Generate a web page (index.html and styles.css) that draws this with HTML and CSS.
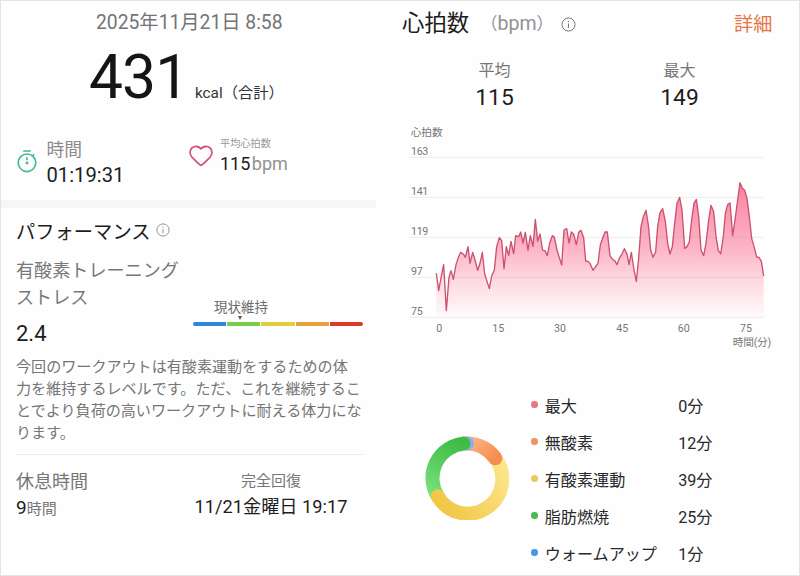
FILE: index.html
```html
<!DOCTYPE html>
<html lang="ja">
<head>
<meta charset="utf-8">
<title>ワークアウト</title>
<link rel="stylesheet" href="styles.css">
</head>
<body>
<main class="page">
  <section class="summary">
    <p class="date">2025年11月21日 8:58</p>
    <p class="calories"><span class="calories-value">431</span><span class="calories-unit">kcal（合計）</span></p>
    <div class="stats">
      <div class="stat stat-time">
        <svg class="timer-icon" viewBox="0 0 20 24" fill="none" stroke="#45b898" stroke-width="1.7">
          <circle cx="10" cy="13.8" r="8.8"/><path d="M6.2 2h7.6M15.8 5.4l1.4 1.2M10 8.2v3"/><circle cx="10" cy="14" r="1.1" fill="#45b898" stroke-width="1"/>
        </svg>
        <div><p class="stat-label">時間</p><p class="stat-value">01:19:31</p></div>
      </div>
      <div class="stat stat-heart">
        <svg class="heart-icon" viewBox="0 0 24 22" fill="none" stroke="#d5557a" stroke-width="1.8" stroke-linejoin="round">
          <path d="M12 20.3Q10.9 20 9.8 18.9L3.3 12.6C.1 9.4.5 5 3.1 2.8C5.8.6 9.700 1.200 12 3.800C14.300 1.200 18.200.6 20.900 2.800C23.500 5 23.900 9.400 20.700 12.600L14.200 18.900Q13.100 20 12 20.300Z"/>
        </svg>
        <div><p class="stat-small">平均心拍数</p><p class="stat-bpm">115<span>bpm</span></p></div>
      </div>
    </div>
    <div class="band"></div>
    <div class="performance">
      <h2 class="perf-title">パフォーマンス
        <svg class="info-small" viewBox="0 0 14 14" fill="none" stroke="#888" stroke-width="0.9"><circle cx="7" cy="7" r="6.100"/><path d="M7 6v4.300M7 3.600v1.200"/></svg>
      </h2>
      <div class="stress">
        <div class="stress-text"><p class="stress-label">有酸素トレーニング<br>ストレス</p><p class="stress-value">2.4</p></div>
        <div class="scale">
          <p class="scale-label">現状維持</p>
          <svg class="scale-mark" viewBox="0 0 4 4"><path d="M0 0h4L2 4z" fill="#555"/></svg>
          <div class="scale-bar"><i class="blue"></i><i class="green"></i><i class="yellow"></i><i class="orange"></i><i class="red"></i></div>
        </div>
      </div>
      <p class="note">今回のワークアウトは有酸素運動をするための体<br>力を維持するレベルです。ただ、これを継続するこ<br>とでより負荷の高いワークアウトに耐える体力にな<br>ります。</p>
      <div class="rest">
        <div><p class="rest-label">休息時間</p><p class="rest-value">9<span>時間</span></p></div>
        <div class="recovery"><p class="recovery-label">完全回復</p><p class="recovery-value">11/21金曜日 19:17</p></div>
      </div>
    </div>
  </section>

  <section class="heart">
    <header class="heart-head">
      <h1>心拍数</h1><span class="heart-unit"><span class="paren">（</span>bpm<span class="paren">）</span></span>
      <svg class="info-large" viewBox="0 0 14 14" fill="none" stroke="#777" stroke-width="0.9"><circle cx="7" cy="7" r="6.100"/><path d="M7 6v4.300M7 3.600v1.200"/></svg>
      <a class="detail">詳細</a>
    </header>
    <div class="extremes">
      <div><p class="ext-label">平均</p><p class="ext-value">115</p></div>
      <div><p class="ext-label">最大</p><p class="ext-value">149</p></div>
    </div>
    <svg class="chart" viewBox="0 0 1200 720">
      <defs>
        <linearGradient id="area" gradientUnits="userSpaceOnUse" x1="0" y1="188" x2="0" y2="590">
          <stop offset="0" stop-color="#fb839f"/><stop offset=".5" stop-color="#fcb6c7"/><stop offset=".75" stop-color="#fddce3"/><stop offset="1" stop-color="#fffafb"/>
        </linearGradient>
      </defs>
      <path class="area" d="M109 460L116 512 124 468 131 434 139 572 147 472 153 452 160 478 168 434 175 412 182 397 190 402 196 412 204 380 210 430 218 397 225 420 233 451 240 430 247 397 254 462 261 484 268 506 275 468 283 450 290 380 298 353 305 362 312 446 319 380 326 406 333 364 341 401 347 347 356 350 362 336 369 369 376 337 384 391 391 347 399 379 406 298 413 364 420 342 428 391 435 392 442 407 449 370 457 347 463 351 471 390 478 413 485 435 492 330 500 326 507 369 514 336 521 342 529 374 536 337 543 331 551 353 557 423 565 425 571 432 579 451 587 440 594 430 601 375 608 355 615 336 622 336 630 407 636 416 644 422 651 434 658 415 666 402 673 386 681 402 687 434 694 397 702 450 709 484 716 415 723 320 730 290 738 271 745 315 752 390 759 412 767 395 773 320 780 278 788 266 796 305 803 370 810 402 817 380 824 310 831 250 839 232 846 270 854 385 861 380 868 365 875 300 882 250 889 238 896 290 903 390 911 407 918 370 926 300 933 256 941 275 948 350 955 391 962 402 970 350 976 280 983 254 990 249 998 347 1005 300 1013 240 1020 188 1027 205 1034 211 1041 235 1048 290 1055 355 1063 383 1070 411 1077 412 1084 424 1091 468V590H109z"/>
      <path class="grid" d="M30 112H1091M30 232H1091M30 352H1091M30 472H1091M30 592H1091"/>
      <path class="line" d="M109 460L116 512 124 468 131 434 139 572 147 472 153 452 160 478 168 434 175 412 182 397 190 402 196 412 204 380 210 430 218 397 225 420 233 451 240 430 247 397 254 462 261 484 268 506 275 468 283 450 290 380 298 353 305 362 312 446 319 380 326 406 333 364 341 401 347 347 356 350 362 336 369 369 376 337 384 391 391 347 399 379 406 298 413 364 420 342 428 391 435 392 442 407 449 370 457 347 463 351 471 390 478 413 485 435 492 330 500 326 507 369 514 336 521 342 529 374 536 337 543 331 551 353 557 423 565 425 571 432 579 451 587 440 594 430 601 375 608 355 615 336 622 336 630 407 636 416 644 422 651 434 658 415 666 402 673 386 681 402 687 434 694 397 702 450 709 484 716 415 723 320 730 290 738 271 745 315 752 390 759 412 767 395 773 320 780 278 788 266 796 305 803 370 810 402 817 380 824 310 831 250 839 232 846 270 854 385 861 380 868 365 875 300 882 250 889 238 896 290 903 390 911 407 918 370 926 300 933 256 941 275 948 350 955 391 962 402 970 350 976 280 983 254 990 249 998 347 1005 300 1013 240 1020 188 1027 205 1034 211 1041 235 1048 290 1055 355 1063 383 1070 411 1077 412 1084 424 1091 468"/>
      <g class="axis">
        <text x="32" y="49">心拍数</text>
        <text x="33" y="104" textLength="52">163</text><text x="33" y="224" textLength="52">141</text><text x="33" y="344" textLength="52">119</text><text x="33" y="465" textLength="35">97</text><text x="33" y="585" textLength="35">75</text>
        <g class="ticks"><text x="118" y="636">0</text><text x="295" y="636">15</text><text x="480" y="636">30</text><text x="667" y="636">45</text><text x="851" y="636">60</text><text x="1038" y="636">75</text></g>
        <text x="998" y="678" textLength="116">時間(分)</text>
      </g>
    </svg>
    <div class="zones">
      <svg class="donut" viewBox="0 0 84 84" fill="none" stroke-width="14">
        <defs>
          <linearGradient id="go" gradientUnits="userSpaceOnUse" x1="46" y1="6" x2="70" y2="24"><stop stop-color="#fab181"/><stop offset="1" stop-color="#f48d50"/></linearGradient>
          <linearGradient id="gy" gradientUnits="userSpaceOnUse" x1="76" y1="25" x2="14" y2="64"><stop stop-color="#fce58a"/><stop offset="1" stop-color="#f2c747"/></linearGradient>
          <linearGradient id="gg" gradientUnits="userSpaceOnUse" x1="10" y1="60" x2="38" y2="6"><stop stop-color="#79e07c"/><stop offset="1" stop-color="#3dbb42"/></linearGradient>
        </defs>
        <path d="M42 7.400A34.600 34.600 0 0 1 70.300 22.200" stroke="url(#go)"/>
        <path d="M39.200 7.500L42 7.400" stroke="#83aff0" stroke-linecap="round"/>
        <path d="M12.700 60.300A34.600 34.600 0 0 1 38.400 7.600" stroke="url(#gg)" stroke-linecap="round"/>
        <path d="M70.300 22.200A34.600 34.600 0 1 1 12.700 60.300" stroke="url(#gy)" stroke-linecap="round"/>
        <path d="M58 11.400A34.600 34.600 0 0 1 70.300 22.200" stroke="url(#go)"/>
        <circle cx="70.300" cy="22.200" r="7" fill="url(#go)" stroke="none"/>
      </svg>
      <ul class="legend">
        <li><i class="z-max"></i><span>最大</span><b>0分</b></li>
        <li><i class="z-anaerobic"></i><span>無酸素</span><b>12分</b></li>
        <li><i class="z-aerobic"></i><span>有酸素運動</span><b>39分</b></li>
        <li><i class="z-fat"></i><span>脂肪燃焼</span><b>25分</b></li>
        <li><i class="z-warm"></i><span>ウォームアップ</span><b>1分</b></li>
      </ul>
    </div>
  </section>
</main>
</body>
</html>
```
FILE: styles.css
```css
* { box-sizing: border-box; margin: 0; padding: 0; }
body { width: 800px; height: 576px; overflow: hidden; font-family: Roboto, "Noto Sans CJK JP", sans-serif; color: #1d1d1d; background: #fefefe; white-space: nowrap; }
svg { display: block; flex: none; }
.page { display: grid; grid-template-columns: 399px 399px; width: 800px; height: 576px; border: 1px solid #e4e4e4; }
.summary { width: 375px; }
.date { height: 42px; line-height: 43px; padding-left: 95px; font-size: 19.300px; color: #747474; }
.calories { display: flex; align-items: baseline; height: 82px; padding-left: 88px; line-height: 70px; }
.calories-value { font-size: 60.500px; letter-spacing: -.9px; width: 106px; color: #151515; }
.calories-unit { font-size: 15.300px; color: #333; }
.stats { display: flex; height: 75px; }
.stat { display: flex; }
.stat-time { width: 188px; padding: 12px 0 0 16px; }
.timer-icon { width: 20px; height: 24px; margin: 12px 9.500px 0 0; }
.stat-label { height: 24px; line-height: 25px; font-size: 17.800px; color: #8b8b8b; }
.stat-value { height: 28px; line-height: 29px; font-size: 20.200px; }
.heart-icon { width: 24px; height: 22px; margin: 20px 7px 0 0; }
.stat-small { height: 20px; margin-top: 8px; line-height: 22px; font-size: 10.200px; color: #999; }
.stat-bpm { height: 22px; line-height: 22px; font-size: 18px; }
.stat-bpm span { margin-left: 1.500px; color: #919191; }
.band { height: 8px; background: #f6f6f6; }
.performance { padding-left: 15px; }
.perf-title { display: flex; align-items: center; height: 46px; font-size: 19.300px; font-weight: 400; }
.info-small { width: 14px; height: 14px; margin: 0 0 3px 5.500px; }
.stress { display: flex; height: 101px; }
.stress-text { width: 177px; }
.stress-label { padding-top: 4px; font-size: 18.100px; line-height: 26.500px; color: #787878; }
.stress-value { height: 44px; line-height: 45px; font-size: 22px; }
.scale { width: 170px; padding-top: 42px; }
.scale-label { height: 20px; padding-left: 21px; line-height: 22px; font-size: 13.500px; color: #6c6c6c; }
.scale-mark { width: 4px; height: 4px; margin: 0 0 2px 45px; }
.scale-bar { display: grid; grid-template-columns: repeat(5, 1fr); gap: 1px; height: 4px; border-radius: 2px; overflow: hidden; }
.blue { background: #2d87dc; }
.green { background: #79ce4c; }
.yellow { background: #dfcf3d; }
.orange { background: #e7a13d; }
.red { background: #dc3a29; }
.note { width: 348px; height: 100px; padding-top: 1px; border-bottom: 1px solid #ebebeb; font-size: 15.080px; line-height: 22px; color: #757575; }
.rest { display: flex; padding-top: 13px; }
.rest-label { height: 27px; line-height: 27px; font-size: 18px; color: #767676; }
.rest-value { height: 26px; line-height: 26px; font-size: 19px; }
.rest-value span { font-size: 15px; color: #777; }
.recovery { width: 160px; margin-left: 103px; text-align: center; }
.recovery-label { height: 26px; line-height: 26px; font-size: 15px; color: #777; }
.recovery-value { height: 26px; line-height: 25px; font-size: 18.200px; }
.heart-head { display: flex; align-items: center; height: 46px; padding-left: 2px; }
.heart-head h1 { width: 77px; height: 46px; line-height: 44px; font-size: 22.400px; font-weight: 400; }
.heart-unit { width: 82px; height: 46px; padding-left: 1.500px; line-height: 46px; font-size: 19.500px; color: #929292; }
.paren { font-size: 17px; }
.info-large { width: 15px; height: 15px; }
.detail { height: 46px; margin-left: 158px; line-height: 47px; font-size: 19.200px; color: #e77442; }
.extremes { display: flex; height: 73px; padding-top: 10px; }
.extremes div { width: 185px; text-align: center; }
.extremes div:first-child { padding-left: 2px; width: 187px; }
.ext-label { height: 26px; line-height: 27px; font-size: 16px; color: #777; }
.ext-value { height: 30px; line-height: 30px; font-size: 22.800px; }
.chart { width: 400px; height: 240px; }
.area { fill: url(#area); }
.grid { fill: none; stroke: #999; stroke-opacity: .16; stroke-width: 3; }
.line { fill: none; stroke: #cc506f; stroke-width: 4; stroke-linejoin: round; }
.axis { font-size: 32px; fill: #777; }
.ticks { text-anchor: middle; }
.zones { display: flex; padding-top: 26px; }
.donut { width: 84px; height: 84px; margin: 50.400px 0 0 24.600px; }
.legend { list-style: none; margin-left: 22.700px; }
.legend li { display: flex; align-items: center; height: 37px; font-size: 16.100px; color: #292929; }
.legend i { width: 6.500px; height: 6.500px; margin-right: 7px; border-radius: 50%; }
.legend span { width: 133.500px; }
.legend b { font-weight: 400; }
.z-max { background: #ec7580; }
.z-anaerobic { background: #ec9662; }
.z-aerobic { background: #e8cc62; }
.z-fat { background: #4bb950; }
.z-warm { background: #4699ea; }
```
